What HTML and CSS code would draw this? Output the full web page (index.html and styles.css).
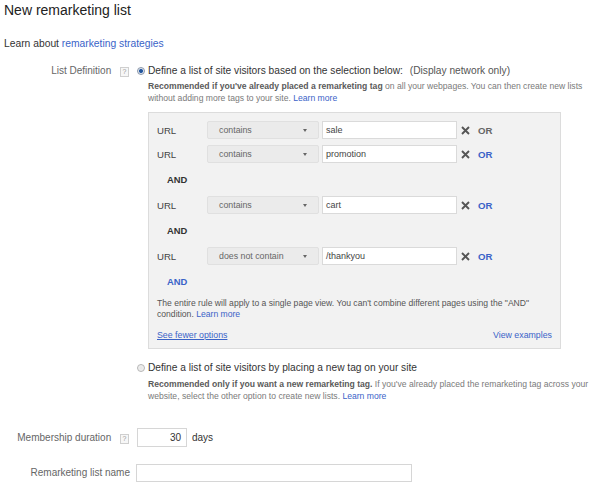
FILE: index.html
```html
<!DOCTYPE html>
<html>
<head>
<meta charset="utf-8">
<link rel="stylesheet" href="styles.css">
</head>
<body>
<div class="page">
  <h1 class="title">New remarketing list</h1>
  <p class="learn">Learn about <a class="link" href="#">remarketing strategies</a></p>

  <div class="field field-def">
    <div class="label">List Definition <span class="help">?</span></div>
    <div class="content">
      <div class="option">
        <span class="radio radio-on"></span>
        <span class="opt-text">Define a list of site visitors based on the selection below:</span>
        <span class="opt-note">(Display network only)</span>
      </div>
      <div class="option-body">
        <p class="helper"><b>Recommended if you've already placed a remarketing tag</b> on all your webpages. You can then create new lists without adding more tags to your site. <a class="link" href="#">Learn more</a></p>
        <div class="rules">
          <div class="cond">
            <span class="cond-key">URL</span>
            <span class="select"><span class="select-text">contains</span><span class="caret"></span></span>
            <span class="text-input">sale</span>
            <svg class="remove" width="9" height="9" viewBox="0 0 9 9"><path d="M1 1L8 8M8 1L1 8" stroke="#555" stroke-width="1.9" fill="none"/></svg>
            <span class="or or-muted">OR</span>
          </div>
          <div class="cond cond-next">
            <span class="cond-key">URL</span>
            <span class="select"><span class="select-text">contains</span><span class="caret"></span></span>
            <span class="text-input">promotion</span>
            <svg class="remove" width="9" height="9" viewBox="0 0 9 9"><path d="M1 1L8 8M8 1L1 8" stroke="#555" stroke-width="1.9" fill="none"/></svg>
            <span class="or">OR</span>
          </div>
          <div class="and">AND</div>
          <div class="cond">
            <span class="cond-key">URL</span>
            <span class="select"><span class="select-text">contains</span><span class="caret"></span></span>
            <span class="text-input">cart</span>
            <svg class="remove" width="9" height="9" viewBox="0 0 9 9"><path d="M1 1L8 8M8 1L1 8" stroke="#555" stroke-width="1.9" fill="none"/></svg>
            <span class="or">OR</span>
          </div>
          <div class="and">AND</div>
          <div class="cond">
            <span class="cond-key">URL</span>
            <span class="select"><span class="select-text">does not contain</span><span class="caret"></span></span>
            <span class="text-input">/thankyou</span>
            <svg class="remove" width="9" height="9" viewBox="0 0 9 9"><path d="M1 1L8 8M8 1L1 8" stroke="#555" stroke-width="1.9" fill="none"/></svg>
            <span class="or">OR</span>
          </div>
          <div class="and and-link">AND</div>
          <p class="rule-note">The entire rule will apply to a single page view. You can't combine different pages using the "AND" condition. <a class="link" href="#">Learn more</a></p>
          <div class="rule-foot">
            <a class="link link-under" href="#">See fewer options</a>
            <a class="link" href="#">View examples</a>
          </div>
        </div>
      </div>
      <div class="option option-second">
        <span class="radio"></span>
        <span class="opt-text">Define a list of site visitors by placing a new tag on your site</span>
      </div>
      <div class="option-body">
        <p class="helper"><b>Recommended only if you want a new remarketing tag.</b> If you've already placed the remarketing tag across your website, select the other option to create new lists. <a class="link" href="#">Learn more</a></p>
      </div>
    </div>
  </div>

  <div class="field field-dur">
    <div class="label">Membership duration <span class="help">?</span></div>
    <div class="content content-inline">
      <span class="num-input">30</span>
      <span class="unit">days</span>
    </div>
  </div>

  <div class="field field-name">
    <div class="label">Remarketing list name</div>
    <div class="content">
      <span class="name-input"></span>
    </div>
  </div>
</div>
</body>
</html>
```

FILE: styles.css
```css
* { box-sizing: border-box; }
html, body { margin: 0; padding: 0; background: #fff; }
body {
  font-family: "Liberation Sans", Arial, sans-serif;
  color: #333;
  width: 600px;
  height: 490px;
  overflow: hidden;
}
.page { padding: 0 0 0 4px; }

.title {
  margin: 1px 0 0;
  font-size: 14px;
  line-height: 18px;
  font-weight: normal;
  color: #222;
}
.learn {
  margin: 18px 0 0;
  font-size: 10.3px;
  line-height: 13px;
  color: #333;
}
.link { color: #3a63c8; text-decoration: none; }
.link-under { text-decoration: underline; }

.field {
  display: grid;
  grid-template-columns: 126px 1fr;
  column-gap: 7px;
}
.field-def { margin-top: 14px; }
.field-dur { margin-top: 26px; align-items: center; }
.field-name { margin-top: 17px; align-items: center; }

.label {
  text-align: right;
  font-size: 10px;
  line-height: 14px;
  color: #666;
  white-space: nowrap;
}
.help {
  display: inline-block;
  width: 9px;
  height: 10px;
  margin-left: 6px;
  margin-right: 1px;
  border: 1px solid #cfcfcf;
  background: #f7f7f7;
  color: #999;
  font-size: 7px;
  line-height: 8px;
  text-align: center;
  vertical-align: 0;
}

.option {
  display: flex;
  align-items: center;
  height: 14px;
  font-size: 10.2px;
  line-height: 14px;
  color: #333;
  white-space: nowrap;
}
.option-second { margin-top: 12px; }
.radio {
  width: 8px;
  height: 8px;
  margin-right: 3px;
  border-radius: 50%;
  border: 1px solid #b5b5b5;
  background: radial-gradient(circle, #e6e6e6 0, #f4f4f4 4px);
  flex: none;
}
.radio-on {
  border-color: #8a96a8;
  background: radial-gradient(circle, #1d4f91 0, #2b5ea6 1.6px, #dfe6ef 2.4px, #f3f5f8 4px);
}
.opt-note { margin-left: 7px; color: #555; }

.option-body { padding-left: 11px; width: 452px; }
.helper {
  margin: 3px 0 0;
  font-size: 8.6px;
  line-height: 11.5px;
  color: #7a7a7a;
}
.helper b { color: #5a5a5a; }
.option-second + .option-body .helper { margin-top: 4px; }

.rules {
  margin-top: 8px;
  width: 413px;
  background: #f2f2f2;
  border: 1px solid #dcdcdc;
  padding: 8px 8px 7px 8px;
}
.cond {
  display: flex;
  align-items: center;
  height: 18px;
}
.cond-next { margin-top: 6px; }
.cond-key {
  width: 50px;
  font-size: 9.6px;
  color: #444;
}
.select {
  display: flex;
  align-items: center;
  justify-content: space-between;
  width: 112px;
  height: 18px;
  margin-right: 3px;
  padding: 0 11px 0 11px;
  background: #ebebeb;
  border: 1px solid #e0e0e0;
  border-radius: 2px;
}
.select-text { font-size: 8.8px; color: #666; }
.caret {
  width: 0;
  height: 0;
  border-left: 2.5px solid transparent;
  border-right: 2.5px solid transparent;
  border-top: 3px solid #666;
}
.text-input {
  display: flex;
  align-items: center;
  width: 135px;
  height: 18px;
  padding-left: 3px;
  background: #fff;
  border: 1px solid #dadada;
  font-size: 9px;
  color: #444;
}
.remove { margin-left: 4px; flex: none; }
.or {
  margin-left: 8px;
  font-size: 9.6px;
  font-weight: bold;
  color: #3a63c8;
}
.or-muted { color: #666; }

.and {
  margin: 10px 0 9px;
  padding-left: 10px;
  font-size: 9.4px;
  line-height: 14px;
  font-weight: bold;
  color: #333;
}
.and-link { color: #3a63c8; }

.rule-note {
  margin: 9px 0 0;
  font-size: 8.6px;
  line-height: 10.5px;
  color: #555;
}
.rule-foot {
  display: flex;
  justify-content: space-between;
  margin-top: 10px;
  font-size: 8.8px;
  line-height: 12px;
}

.content-inline { display: flex; align-items: center; }
.num-input {
  width: 50px;
  height: 19px;
  border: 1px solid #d6d6d6;
  background: #fff;
  font-size: 10px;
  line-height: 17px;
  text-align: right;
  padding-right: 5px;
  color: #333;
}
.unit { margin-left: 5px; font-size: 10px; color: #333; }
.name-input {
  display: block;
  width: 276px;
  height: 18px;
  margin-left: -1px;
  border: 1px solid #d6d6d6;
  background: #fff;
}
```
